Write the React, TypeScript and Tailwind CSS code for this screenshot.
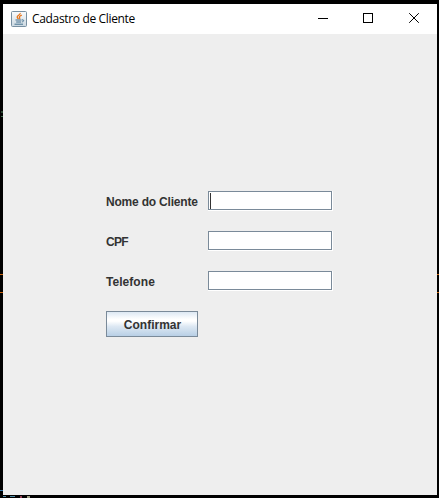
import React from "react";

function JavaIcon() {
  return (
    <svg width="16" height="16" viewBox="0 0 16 16" className="shrink-0">
      <defs>
        <linearGradient id="tile" x1="0" y1="0" x2="0" y2="1">
          <stop offset="0" stopColor="#fbfcfd" />
          <stop offset="1" stopColor="#cbd8e1" />
        </linearGradient>
      </defs>
      <rect x="0.5" y="0.5" width="15" height="15" rx="1" fill="url(#tile)" stroke="#7890a2" />
      <path d="M9.200 2C9.600 4 5.700 4.500 6.200 6.200c.2.7.9 1 1.100 1.900M10.800 4.200C8.700 5 8 5.700 8.600 6.500c.4.600.3 1.100-.3 1.600" fill="none" stroke="#e8751a" strokeWidth="1.300" />
      <path d="M4.500 9h6M5.200 11h5M3.500 13.200h8.500M11 8.900c2.200-.5 2.200 1.600.2 2" fill="none" stroke="#45718f" strokeWidth="1" />
    </svg>
  );
}

function TitleBar() {
  return (
    <header className="flex h-[30px] items-center bg-white pl-2 font-normal text-black">
      <JavaIcon />
      <span className="ml-[5px] w-[110px] whitespace-nowrap font-['Open_Sans','Noto_Sans',sans-serif] text-[12px] leading-4 tracking-[-0.34px]">
        Cadastro de Cliente
      </span>
      <div className="ml-auto flex h-full">
        <svg width="45" height="30" fill="none" stroke="#000" shapeRendering="crispEdges">
          <path d="M17 14.5h10" />
        </svg>
        <svg width="46" height="30" fill="none" stroke="#000" shapeRendering="crispEdges">
          <rect x="17.5" y="9.5" width="9" height="9" />
        </svg>
        <svg width="45" height="30" fill="none" stroke="#000">
          <path d="M17.200 9.200l9.600 9.600M26.800 9.200l-9.600 9.600" />
        </svg>
      </div>
    </header>
  );
}

type FieldProps = { label: string; tracking: string; focused?: boolean };

function Field({ label, tracking, focused = false }: FieldProps) {
  return (
    <div className="flex h-5">
      <label className={`w-[102px] whitespace-nowrap pt-[3px] text-[12px] leading-4 ${tracking}`}>{label}</label>
      <div className="h-5 w-[125px] border-r border-b border-white">
        <div className="h-[19px] w-[124px] border border-[#7a8a99] bg-white pt-px pl-px">
          {focused && <div className="h-4 w-px bg-[#333333]" />}
        </div>
      </div>
    </div>
  );
}

export default function App() {
  return (
    <div className="relative h-[498px] w-[439px] overflow-hidden bg-black pt-1 pl-[3px]">
      <div className="absolute top-[111px] left-px h-[2px] w-[2px] bg-[#28442f]" />
      <div className="absolute top-[116px] left-px h-px w-[2px] bg-[#3f6b4c]" />
      <div className="absolute top-[274px] left-0 h-px w-full bg-[#c9650f]" />
      <div className="absolute top-[292px] left-0 h-px w-full bg-[#c9650f]" />
      <div className="absolute top-[490px] left-0 h-px w-[3px] bg-[#3679a8]" />
      <div className="absolute top-[495px] left-0 flex h-[3px] w-10 items-start gap-1 pt-px pl-[3px]">
        <i className="h-px w-[3px] bg-[#4d8aa3]" />
        <i className="h-px w-[5px] bg-[#4d8aa3]" />
        <i className="ml-px h-0.5 w-0.5 bg-[#934056]" />
        <i className="ml-px h-0.5 w-[3px] bg-[#9c9c83]" />
      </div>
      <main className="relative h-[491px] w-[434px] bg-[#eeeeee] font-['Liberation_Sans',Arial,sans-serif] font-bold text-[#333333]">
        <TitleBar />
        <form className="flex flex-col gap-5 pt-[157px] pl-[103px]">
          <Field label="Nome do Cliente" tracking="tracking-[-0.2px]" focused />
          <Field label="CPF" tracking="tracking-[-0.7px]" />
          <Field label="Telefone" tracking="tracking-[0.05px]" />
          <button type="button" className="h-[26px] w-[92px] border border-[#7a8a99] bg-[linear-gradient(to_bottom,#dde8f3_0%,#ffffff_30%,#ffffff_38%,#dde8f3_60%,#b8cfe5_100%)] pt-0.5 pl-px text-[12px] leading-4">
            Confirmar
          </button>
        </form>
      </main>
    </div>
  );
}
